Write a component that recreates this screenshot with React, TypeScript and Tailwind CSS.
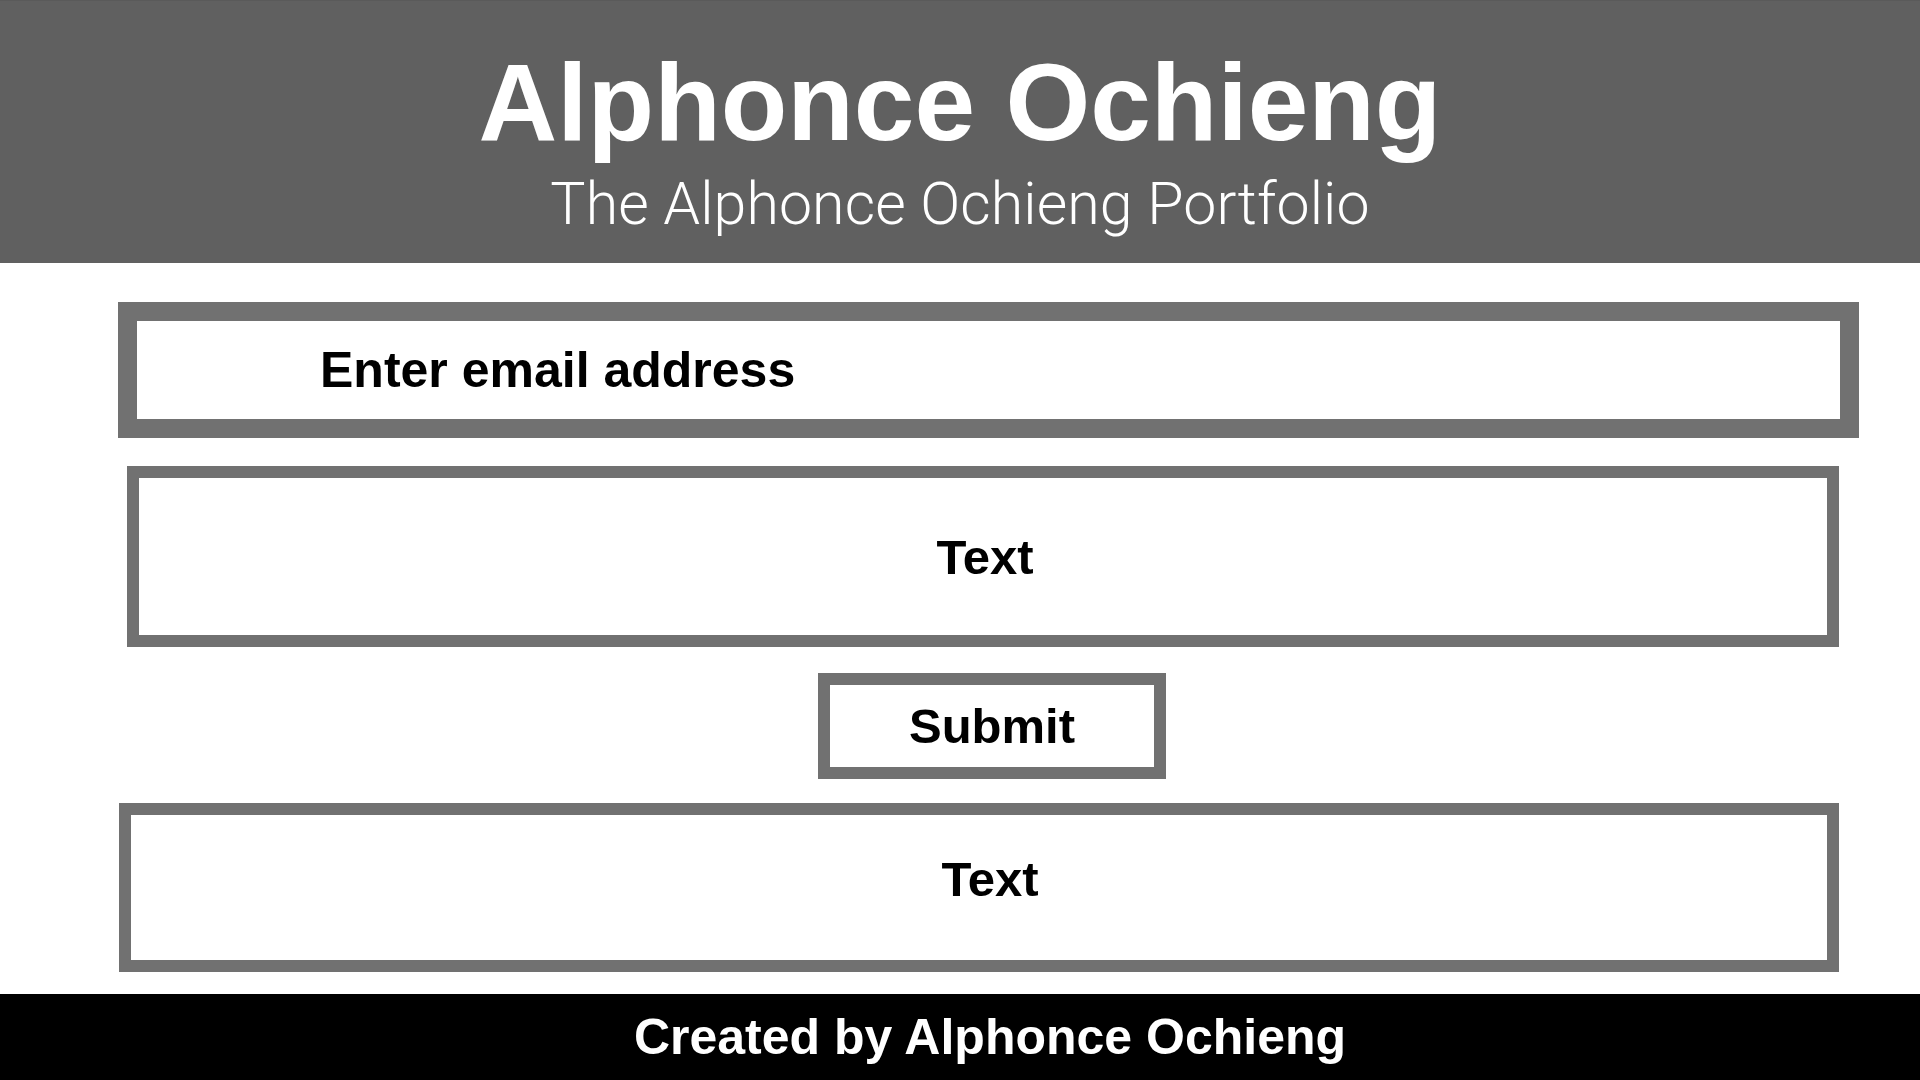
import React from "react";

export default function App() {
  const font = { fontFamily: '"Liberation Sans", Arial, Helvetica, sans-serif' };
  return (
    <div className="w-[1920px] h-[1080px] bg-white flex flex-col overflow-hidden" style={font}>
      <header className="h-[263px] bg-[#606060] border-t border-[#5a5a5a] flex flex-col items-center pt-[47px]">
        <h1 className="text-[109px] leading-none font-bold text-white">Alphonce Ochieng</h1>
        <p className="mt-[17px] text-[59px] leading-none font-light text-white font-['Roboto',_sans-serif] tracking-[0.1px]">The Alphonce Ochieng Portfolio</p>
      </header>

      <div className="mt-[39px] ml-[118px] w-[1741px] h-[136px] border-[19px] border-[#717171] flex items-center pl-[183px]">
        <span className="text-[50px] leading-none font-bold text-black">Enter email address</span>
      </div>

      <div className="mt-[28px] ml-[127px] w-[1712px] h-[181px] border-[12px] border-[#717171] flex items-center justify-center pl-[4px] pt-[2px]">
        <span className="text-[49px] leading-none font-bold text-black">Text</span>
      </div>

      <button className="mt-[26px] ml-[818px] w-[348px] h-[106px] border-[12px] border-[#717171] bg-white flex items-center justify-center">
        <span className="text-[49px] leading-none font-bold text-black">Submit</span>
      </button>

      <div className="mt-[24px] ml-[119px] w-[1720px] h-[169px] border-[12px] border-[#717171] flex items-center justify-center pl-[22px] pb-[17px]">
        <span className="text-[49px] leading-none font-bold text-black">Text</span>
      </div>

      <footer className="mt-[22px] h-[86px] bg-black flex items-center justify-center pl-[60px]">
        <span className="text-[50px] leading-none font-bold text-white">Created by Alphonce Ochieng</span>
      </footer>
    </div>
  );
}
